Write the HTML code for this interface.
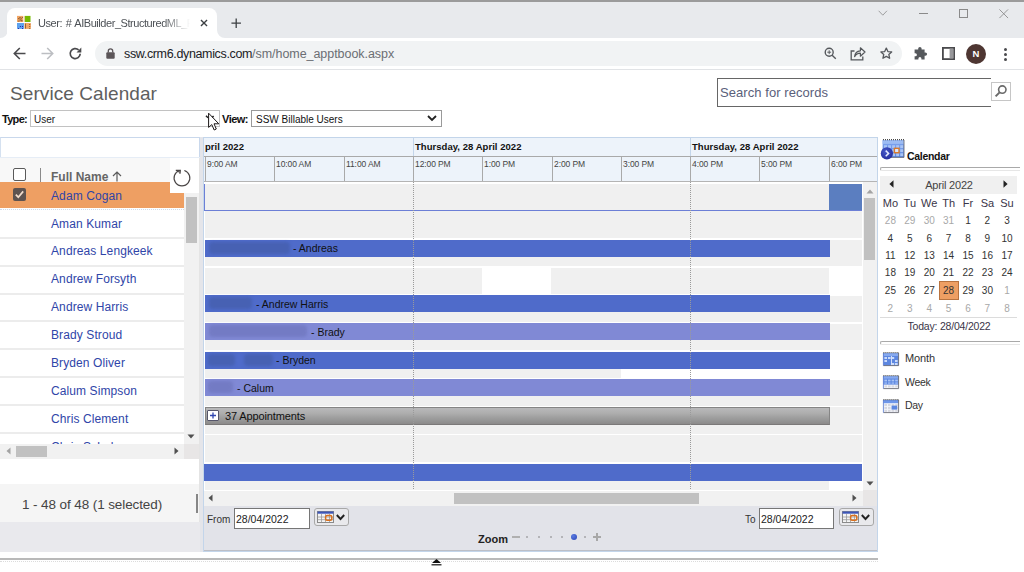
<!DOCTYPE html>
<html lang="en">
<head>
<meta charset="utf-8">
<title>User: # AIBuilder_StructuredML_F</title>
<style>
*{box-sizing:border-box;margin:0;padding:0}
html,body{width:1024px;height:572px;overflow:hidden;background:#fff}
body{position:relative;font-family:"Liberation Sans",sans-serif;font-size:11px;color:#000}
.a{position:absolute}
.t{position:absolute;white-space:nowrap;line-height:1}
.b{font-weight:bold}
svg{position:absolute;overflow:visible}
/* chrome */
#topline{left:0;top:0;width:1024px;height:2px;background:#9b9b9b}
#strip{left:0;top:2px;width:1024px;height:36px;background:#e8eaed}
#tab{left:7px;top:8px;width:210px;height:30px;background:#fff;border-radius:8px 8px 0 0}
#toolbar{left:0;top:38px;width:1024px;height:31px;background:#fff}
#tbline{left:0;top:69px;width:1024px;height:1px;background:#e1e3e6}
#pill{left:95px;top:41px;width:806.5px;height:25px;border-radius:12.5px;background:#f1f3f4}
/* grid */
.row{position:absolute;left:0;width:184px;height:28px;border-top:2px solid #ececec;background:#fff}
.nm{position:absolute;left:51px;white-space:nowrap;line-height:1;font-size:12px;letter-spacing:0.1px;color:#2f45a8}
/* timeline */
.bar{position:absolute;left:205px;height:17px;background:#4f6bca}
.bar.l{background:#8089d5}
.bl{position:absolute;filter:blur(1.6px);border-radius:4px}
.bt{position:absolute;white-space:nowrap;line-height:1;font-size:10.5px;color:#111}
.hc{position:absolute;top:156px;height:26px;border-left:1px solid #a9a9a9;border-top:1px solid #a9a9a9}
.hl{position:absolute;top:160px;font-size:8.5px;letter-spacing:-0.1px;line-height:1;color:#444;white-space:nowrap}
.gr{position:absolute;background:#f0f0f0}
/* mini calendar */
.d{position:absolute;width:20px;text-align:center;font-size:10px;line-height:11px;color:#333;white-space:nowrap}
.d.o{color:#a8a8a8}
</style>
</head>
<body>
<!-- ======= browser chrome ======= -->
<div class="a" id="strip"></div>
<div class="a" id="topline"></div>
<div class="a" id="tab"></div>
<svg style="left:0;top:30px" width="8" height="8"><path d="M0 8 H8 V0 A8 8 0 0 1 0 8Z" fill="#fff"/></svg>
<svg style="left:217px;top:30px" width="8" height="8"><path d="M8 8 H0 V0 A8 8 0 0 0 8 8Z" fill="#fff"/></svg>
<div class="a" id="toolbar"></div>
<div class="a" id="tbline"></div>
<div class="a" id="pill"></div>

<!-- favicon -->
<svg style="left:16px;top:15px" width="16" height="15" viewBox="16 15 16 15">
<rect x="17" y="15.9" width="6.3" height="6.1" fill="#f2a766"/>
<rect x="24" y="15.9" width="0.8" height="6.1" fill="#f6d2b4"/>
<rect x="24.8" y="15.9" width="5.7" height="6.1" fill="#76b900"/>
<rect x="17" y="23" width="7" height="5.9" fill="#5ea2ee"/>
<rect x="24.4" y="23" width="6.5" height="5.9" fill="#f2a766"/>
<g fill="#6b3f1e" fill-opacity="0.8"><rect x="18.2" y="18" width="1.2" height="1.2"/><rect x="19.4" y="17" width="1.2" height="1.2"/><rect x="20.6" y="18.2" width="1.2" height="1.2"/><rect x="19.6" y="19.4" width="1.2" height="1.2"/><rect x="21.2" y="20" width="1.2" height="1.4"/><rect x="18.2" y="20.6" width="1.2" height="1"/><rect x="21.8" y="17" width="1" height="1"/></g>
<g fill="#2a1ca8"><rect x="19.9" y="26" width="1" height="1"/><rect x="22" y="26" width="1" height="1"/><rect x="18" y="28" width="1" height="0.9"/><rect x="22" y="28" width="1" height="0.9"/></g>
<g fill="#6b3f1e" fill-opacity="0.85"><rect x="25.2" y="23.6" width="0.8" height="5"/><rect x="29.2" y="24" width="1" height="0.9"/><rect x="29.2" y="26" width="1" height="0.9"/><rect x="29.2" y="28" width="1" height="0.8"/></g>
</svg>
<div class="t" id="tabtitle" style="left:38px;top:15px;line-height:16px;height:18px;font-size:11px;letter-spacing:-0.45px;word-spacing:1px;color:#4d5156;width:152px;overflow:hidden;-webkit-mask-image:linear-gradient(90deg,#000 82%,transparent 100%);mask-image:linear-gradient(90deg,#000 82%,transparent 100%)">User: # AIBuilder_StructuredML_F</div>
<svg style="left:199.5px;top:19.2px" width="8" height="8" viewBox="0 0 10 10"><path d="M1.2 1.2 L8.8 8.8 M8.8 1.2 L1.2 8.8" stroke="#3c4043" stroke-width="1.7" fill="none"/></svg>
<svg style="left:231px;top:18px" width="10.4" height="10.4" viewBox="0 0 12 12"><path d="M6 0.5 V11.5 M0.5 6 H11.5" stroke="#3c4043" stroke-width="1.5" fill="none"/></svg>
<!-- window controls -->
<svg style="left:878.3px;top:10px" width="9.6" height="6.4" viewBox="0 0 12 8"><path d="M0.8 1 L6 6.5 L11.2 1" stroke="#8a8a8a" stroke-width="1" fill="none"/></svg>
<div class="a" style="left:919px;top:13px;width:9px;height:1px;background:#8a8a8a"></div>
<div class="a" style="left:959px;top:9px;width:9px;height:9px;border:1px solid #8a8a8a"></div>
<svg style="left:999px;top:9px" width="9.5" height="9.5" viewBox="0 0 11 11"><path d="M0.5 0.5 L10.5 10.5 M10.5 0.5 L0.5 10.5" stroke="#8a8a8a" stroke-width="1" fill="none"/></svg>
<!-- nav -->
<svg style="left:13px;top:47px" width="13" height="13" viewBox="0 0 13 13"><path d="M12.5 6.5 H1.5 M6.8 1 L1.3 6.5 L6.8 12" stroke="#4a4a4d" stroke-width="1.6" fill="none"/></svg>
<svg style="left:41px;top:47px" width="13" height="13" viewBox="0 0 13 13"><path d="M0.5 6.5 H11.5 M6.2 1 L11.7 6.5 L6.2 12" stroke="#bcbec2" stroke-width="1.6" fill="none"/></svg>
<svg style="left:69px;top:47px" width="13" height="13" viewBox="0 0 13 13"><path d="M11.2 6.8 A5 5 0 1 1 9.6 2.9" stroke="#4a4a4d" stroke-width="1.7" fill="none"/><path d="M12.3 0.6 V5.4 H7.5 Z" fill="#4a4a4d"/></svg>
<!-- lock -->
<svg style="left:106px;top:48px" width="9" height="11" viewBox="0 0 9 11"><rect x="0.3" y="4.2" width="8.4" height="6.5" rx="1" fill="#5b5558"/><path d="M2.3 4.5 V3 A2.2 2.2 0 0 1 6.7 3 V4.5" stroke="#5b5558" stroke-width="1.3" fill="none"/></svg>
<div class="t" id="url" style="left:124px;top:48px;font-size:12.5px;color:#202124;letter-spacing:-0.35px">ssw.crm6.dynamics.com<span style="color:#6b6e73;letter-spacing:-0.05px">/sm/home_apptbook.aspx</span></div>
<!-- right icons -->
<svg style="left:823.5px;top:47px" width="13" height="13" viewBox="0 0 15 15"><circle cx="6" cy="6" r="4.6" stroke="#55585c" stroke-width="1.6" fill="none"/><path d="M9.4 9.4 L13.6 13.6" stroke="#55585c" stroke-width="1.6"/><path d="M3.8 6 H8.2 M6 3.8 V8.2" stroke="#55585c" stroke-width="1.1"/></svg>
<svg style="left:850px;top:46px" width="16" height="15" viewBox="0 0 16 15"><path d="M4.5 5 H1.2 V13.8 H12.8 V10.5" stroke="#55585c" stroke-width="1.3" fill="none"/><path d="M4.6 10.6 C5 6.8 7.6 5 10.4 4.8 V1.8 L15 6 L10.4 10.2 V7.2 C8 7.2 6.2 8 4.6 10.6Z" stroke="#55585c" stroke-width="1.2" fill="none" stroke-linejoin="round"/></svg>
<svg style="left:879.5px;top:47px" width="12.6" height="12.6" viewBox="0 0 15 15"><path d="M7.5 1.3 L9.4 5.4 L13.9 5.9 L10.5 8.9 L11.5 13.4 L7.5 11.1 L3.5 13.4 L4.5 8.9 L1.1 5.9 L5.6 5.4Z" stroke="#55585c" stroke-width="1.55" fill="none" stroke-linejoin="round"/></svg>
<svg style="left:913px;top:46px" width="15" height="15" viewBox="0 0 15 15"><path d="M5.2 2.6 A1.7 1.7 0 0 1 8.6 2.6 V3.4 H11.6 V6.4 H12.4 A1.7 1.7 0 0 1 12.4 9.8 H11.6 V13.5 H8.4 V12.6 A1.5 1.5 0 0 0 5.4 12.6 V13.5 H1.6 V10.2 H2.4 A1.5 1.5 0 0 0 2.4 7.2 H1.6 V3.4 H5.2Z" fill="#55585c"/></svg>
<svg style="left:942px;top:47px" width="13" height="13" viewBox="0 0 13 13"><rect x="0.9" y="0.9" width="11.2" height="11.2" stroke="#4a4a4d" stroke-width="1.8" fill="#fff"/><rect x="7.6" y="1.6" width="3.8" height="9.8" fill="#97979a"/></svg>
<div class="a" style="left:966px;top:44px;width:20px;height:20px;border-radius:50%;background:#4e3632"></div>
<div class="t" style="left:966px;top:49px;width:20px;text-align:center;font-size:9.5px;font-weight:bold;color:#fff">N</div>
<div class="a" style="left:1004px;top:48px;width:3px;height:3px;border-radius:50%;background:#4a4a4d"></div>
<div class="a" style="left:1004px;top:53px;width:3px;height:3px;border-radius:50%;background:#4a4a4d"></div>
<div class="a" style="left:1004px;top:58px;width:3px;height:3px;border-radius:50%;background:#4a4a4d"></div>


<!-- ======= page header ======= -->
<div class="t" id="title" style="left:10px;top:84px;font-size:19px;letter-spacing:0.08px;color:#5e5e5e">Service Calendar</div>
<div class="a" style="left:717px;top:78px;width:274px;height:29px;border:1px solid #666;border-right:none;background:#fff"></div>
<div class="t" id="search" style="left:720px;top:86px;font-size:13px;letter-spacing:0.06px;color:#5a607a">Search for records</div>
<div class="a" style="left:991px;top:82px;width:20px;height:19px;border:1px solid #c6c6c6;background:#fff"></div>
<svg style="left:994px;top:84px" width="14" height="14" viewBox="0 0 14 14"><circle cx="8.3" cy="5.6" r="3.7" stroke="#6a6a6a" stroke-width="1.6" fill="none"/><path d="M5.6 8.4 L1.6 12.4" stroke="#6a6a6a" stroke-width="2"/></svg>
<div class="t b" id="typel" style="left:2px;top:114px;font-size:11px;letter-spacing:-0.7px;color:#111">Type:</div>
<div class="a" style="left:30px;top:110px;width:190px;height:17px;border:1px solid #c2c2c2;background:#fff"></div>
<div class="t" style="left:34px;top:115px;font-size:10px;color:#222">User</div>
<div class="t b" id="viewl" style="left:222px;top:114px;font-size:11px;letter-spacing:-0.5px;color:#111">View:</div>
<div class="a" style="left:251px;top:110px;width:191px;height:17px;border:1px solid #9a9a9a;background:#fff"></div>
<div class="t" id="viewv" style="left:256px;top:115px;font-size:10px;color:#111">SSW Billable Users</div>
<svg style="left:427px;top:115px" width="10" height="7" viewBox="0 0 10 7"><path d="M1 1 L5 5 L9 1" stroke="#222" stroke-width="1.8" fill="none"/></svg>
<!-- mouse cursor -->
<svg style="left:204px;top:110px" width="18" height="22" viewBox="204 110 18 22"><path d="M208.6 113.2 V127.4 L211.8 124.6 L214.2 130 L216.3 129 L214 123.8 H218.8 Z" fill="#fff" stroke="#1a1616" stroke-width="1" stroke-linejoin="round"/><path d="M206 115.8 L208 117.8 M212.2 117.4 L213.6 116" stroke="#222" stroke-width="1.5" fill="none"/></svg>


<!-- ======= left grid ======= -->
<div class="a" style="left:0;top:137px;width:200px;height:21px;border-top:1px solid #c9d8ec;border-right:1px solid #c9d8ec;border-left:1px solid #d5e1f0;background:#fff"></div>
<div class="a" style="left:0;top:157px;width:200px;height:1px;background:#e6edf6"></div>
<div class="a" style="left:0;top:158px;width:184px;height:24px;background:#f8f8f8"></div>
<div class="a" style="left:13px;top:168px;width:13px;height:13px;border:1px solid #5a5a5a;border-radius:2px;background:#fff"></div>
<div class="a" style="left:40px;top:168px;width:1px;height:14px;background:#8a8a8a"></div>
<div class="t" id="fullname" style="left:51px;top:171px;font-size:12px;font-weight:bold;color:#666">Full Name</div>
<svg style="left:112px;top:171px" width="10" height="11" viewBox="0 0 10 11"><path d="M5 10.5 V1.2 M1 5 L5 1 L9 5" stroke="#5c5c5c" stroke-width="1.2" fill="none"/></svg>
<div class="row" style="top:182px;height:26px;background:#ee9f63;border-top:none"></div>
<div class="a" style="left:13px;top:188px;width:13px;height:13px;background:#5e5350;border-radius:2px"></div>
<svg style="left:14px;top:189px" width="11" height="11" viewBox="0 0 11 11"><path d="M1.8 5.6 L4.3 8.2 L9.2 2.4" stroke="#f1dccb" stroke-width="1.7" fill="none"/></svg>
<div class="nm" style="top:190px">Adam Cogan</div>
<div class="row" style="top:208px;height:29px;border-top:none"></div><div class="a" style="left:0;top:209px;width:184px;height:0;border-top:1px dotted #cfdcec"></div>
<div class="nm" style="top:218px">Aman Kumar</div>
<div class="row" style="top:237px;height:28px"></div>
<div class="nm" style="top:245px">Andreas Lengkeek</div>
<div class="row" style="top:265px;height:28px"></div>
<div class="nm" style="top:273px">Andrew Forsyth</div>
<div class="row" style="top:293px;height:28px"></div>
<div class="nm" style="top:301px">Andrew Harris</div>
<div class="row" style="top:320px;height:28px"></div>
<div class="nm" style="top:329px">Brady Stroud</div>
<div class="row" style="top:348px;height:28px"></div>
<div class="nm" style="top:357px">Bryden Oliver</div>
<div class="row" style="top:376px;height:28px"></div>
<div class="nm" style="top:385px">Calum Simpson</div>
<div class="row" style="top:404px;height:28px"></div>
<div class="nm" style="top:413px">Chris Clement</div>
<div class="row" style="top:432px;height:12px"></div>
<div class="nm" style="top:441px;height:3px;overflow:hidden">Chris Schulz</div>
<div class="a" style="left:170px;top:158px;width:30px;height:35px;background:#fff"></div>
<svg style="left:170px;top:160px" width="30" height="32" viewBox="170 160 30 32"><path d="M184.3 170.5 A7.9 7.9 0 1 1 179.6 170.5" stroke="#4a4646" stroke-width="1.15" fill="none"/><path d="M175.8 170.3 H180.3 L180 173.8" stroke="#4a4646" stroke-width="1.2" fill="#4a4646" fill-opacity="0.55" stroke-linejoin="miter"/></svg>
<div class="a" style="left:184px;top:193px;width:15px;height:251px;background:#f1f1f1"></div>
<div class="a" style="left:186px;top:197px;width:11px;height:46px;background:#c1c1c1"></div>
<svg style="left:187px;top:434px" width="8" height="5" viewBox="0 0 8 5"><path d="M0.5 0.5 H7.5 L4 4.5Z" fill="#505050"/></svg>
<div class="a" style="left:0;top:444px;width:184px;height:15px;background:#f1f1f1"></div>
<div class="a" style="left:16px;top:446px;width:31px;height:11px;background:#c1c1c1"></div>
<svg style="left:6px;top:447px" width="5" height="8" viewBox="0 0 5 8"><path d="M4.5 0.5 V7.5 L0.5 4Z" fill="#a3a3a3"/></svg>
<svg style="left:174px;top:447px" width="5" height="8" viewBox="0 0 5 8"><path d="M0.5 0.5 V7.5 L4.5 4Z" fill="#505050"/></svg>
<div class="a" style="left:184px;top:444px;width:15px;height:15px;background-color:#e8e6e6;background-image:radial-gradient(circle,#c9cfe0 0.55px,transparent 0.7px);background-size:2px 2px"></div>
<div class="a" style="left:199px;top:158px;width:1px;height:364px;background:#e4e4e4"></div>
<div class="a" style="left:0;top:484px;width:199px;height:38px;background:#f5f5f5"></div>
<div class="t" id="foot" style="left:22px;top:498px;font-size:13.5px;letter-spacing:-0.1px;color:#444">1 - 48 of 48 (1 selected)</div>
<div class="a" style="left:196px;top:494px;width:2px;height:19px;background:#868686"></div>
<div class="a" style="left:0;top:522px;width:204px;height:30px;background:#e9e9ed"></div>

<!-- ======= timeline ======= -->
<div class="a" style="left:200px;top:137px;width:3px;height:415px;background:#e4e5ea"></div>
<div class="a" id="tl" style="left:203px;top:137px;width:675px;height:415px;border:1px solid #c3d5ea;background:#fff"></div>
<div class="a" style="left:204px;top:138px;width:673px;height:44px;background:#edf3fa"></div>
<div class="a" style="left:413px;top:138px;width:1px;height:18px;background:#c3d5ea"></div>
<div class="a" style="left:690px;top:138px;width:1px;height:18px;background:#c3d5ea"></div>
<div class="t b" id="d0" style="left:205px;top:142px;font-size:9.5px;letter-spacing:0.05px;color:#111">pril 2022</div>
<div class="t b" id="d1" style="left:415px;top:142px;font-size:9.5px;letter-spacing:0.04px;color:#111">Thursday, 28 April 2022</div>
<div class="t b" id="d2" style="left:692px;top:142px;font-size:9.5px;letter-spacing:0.04px;color:#111">Thursday, 28 April 2022</div>
<div class="hc" style="left:205px;width:69px"></div>
<div class="hl" style="left:207px">9:00 AM</div>
<div class="hc" style="left:274px;width:70px"></div>
<div class="hl" style="left:276px">10:00 AM</div>
<div class="hc" style="left:344px;width:69px"></div>
<div class="hl" style="left:346px">11:00 AM</div>
<div class="hc" style="left:413px;width:69px"></div>
<div class="hl" style="left:415px">12:00 PM</div>
<div class="hc" style="left:482px;width:70px"></div>
<div class="hl" style="left:484px">1:00 PM</div>
<div class="hc" style="left:552px;width:69px"></div>
<div class="hl" style="left:554px">2:00 PM</div>
<div class="hc" style="left:621px;width:69px"></div>
<div class="hl" style="left:623px">3:00 PM</div>
<div class="hc" style="left:690px;width:69px"></div>
<div class="hl" style="left:692px">4:00 PM</div>
<div class="hc" style="left:759px;width:70px"></div>
<div class="hl" style="left:761px">5:00 PM</div>
<div class="hc" style="left:829px;width:48px"></div>
<div class="hl" style="left:831px">6:00 PM</div>
<div class="a" style="left:204px;top:156px;width:1px;height:1px;background:#a9a9a9"></div>
<div class="a" style="left:204px;top:181px;width:673px;height:1px;background:#b4b4b4"></div>
<div class="gr" style="left:204px;top:184px;width:658px;height:27px;background:#f0f0f0;border-left:1px solid #6c7fd6;border-bottom:1px solid #6c7fd6"></div>
<div class="a" style="left:829px;top:184px;width:33px;height:26px;background:#5b7ec0"></div>
<div class="gr" style="left:205px;top:211px;width:657px;height:27px"></div>
<div class="gr" style="left:205px;top:240px;width:657px;height:26px"></div>
<div class="gr" style="left:205px;top:268px;width:277px;height:26px"></div>
<div class="gr" style="left:551px;top:268px;width:278px;height:26px"></div>
<div class="gr" style="left:205px;top:296px;width:657px;height:26px"></div>
<div class="gr" style="left:205px;top:324px;width:657px;height:26px"></div>
<div class="gr" style="left:205px;top:352px;width:416px;height:26px"></div>
<div class="gr" style="left:205px;top:380px;width:657px;height:26px"></div>
<div class="gr" style="left:205px;top:407px;width:657px;height:27px"></div>
<div class="gr" style="left:205px;top:435px;width:657px;height:27px"></div>
<div class="gr" style="left:205px;top:464px;width:624px;height:26px"></div>
<div class="bar" style="left:205px;top:240px;width:625px;height:16.5px"></div>
<div class="bl" style="left:209px;top:242px;width:81px;height:12px;background:#4761b3"></div>
<div class="bt" id="b2" style="left:293px;top:243px">- Andreas</div>
<div class="bar" style="left:205px;top:295px;width:625px;height:17px"></div>
<div class="bl" style="left:209px;top:297px;width:43px;height:12px;background:#4761b3"></div>
<div class="bt" id="b4" style="left:256px;top:299px">- Andrew Harris</div>
<div class="bar l" style="left:205px;top:323px;width:625px;height:17px"></div>
<div class="bl" style="left:209px;top:325px;width:98px;height:12px;background:#737bc4"></div>
<div class="bt" id="b5" style="left:311px;top:327px">- Brady</div>
<div class="bar" style="left:205px;top:352px;width:625px;height:16.5px"></div>
<div class="bl" style="left:208px;top:354px;width:27px;height:12px;background:#4761b3"></div>
<div class="bl" style="left:244px;top:354px;width:29px;height:12px;background:#4761b3"></div>
<div class="bt" id="b6" style="left:276px;top:355px">- Bryden</div>
<div class="bar l" style="left:205px;top:379px;width:625px;height:17px"></div>
<div class="bl" style="left:208px;top:381px;width:25px;height:12px;background:#737bc4"></div>
<div class="bt" id="b7" style="left:237px;top:383px">- Calum</div>
<div class="a" style="left:205px;top:407px;width:625px;height:18px;border:1px solid #858585;border-bottom-color:#7b7979;background:linear-gradient(#b9b9bb 0%,#adadad 35%,#a1a1a1 55%,#959595 80%,#8c8a8a 100%)"></div>
<div class="a" style="left:207px;top:410px;width:12px;height:11px;border:1px solid #55556a;background:#fff;border-radius:1px"></div>
<svg style="left:209px;top:412px" width="8" height="7" viewBox="0 0 8 7"><path d="M4 0.5 V6.5 M1 3.5 H7" stroke="#2f45b0" stroke-width="1.3"/></svg>
<div class="bt" id="b8" style="font-size:11px;letter-spacing:-0.13px;left:225px;top:411px">37 Appointments</div>
<div class="bar" style="left:204px;top:464px;width:658px;height:16.5px"></div>
<div class="a" style="left:413px;top:182px;width:0;height:309px;border-left:1px dotted #9a9a9a"></div>
<div class="a" style="left:690px;top:182px;width:0;height:309px;border-left:1px dotted #9a9a9a"></div>
<div class="a" style="left:863px;top:182px;width:14px;height:308px;background:#f1f1f1"></div>
<div class="a" style="left:864px;top:198px;width:11px;height:61.5px;background:#c1c1c1"></div>
<svg style="left:866px;top:189px" width="8" height="5" viewBox="0 0 8 5"><path d="M0.5 4.5 H7.5 L4 0.5Z" fill="#a3a3a3"/></svg>
<svg style="left:866px;top:481px" width="8" height="5" viewBox="0 0 8 5"><path d="M0.5 0.5 H7.5 L4 4.5Z" fill="#505050"/></svg>
<div class="a" style="left:204px;top:490px;width:659px;height:16px;background:#f1f1f1;border-top:1px solid #fff"></div>
<div class="a" style="left:454px;top:493px;width:245px;height:11px;background:#c1c1c1"></div>
<svg style="left:208px;top:494px" width="5" height="8" viewBox="0 0 5 8"><path d="M4.5 0.5 V7.5 L0.5 4Z" fill="#505050"/></svg>
<svg style="left:852px;top:494px" width="5" height="8" viewBox="0 0 5 8"><path d="M0.5 0.5 V7.5 L4.5 4Z" fill="#505050"/></svg>
<div class="a" style="left:863px;top:490px;width:14px;height:16px;background-color:#e8e6e6;background-image:radial-gradient(circle,#c9cfe0 0.55px,transparent 0.7px);background-size:2px 2px"></div>
<div class="a" style="left:204px;top:506px;width:673px;height:45px;background:#e2e3e9"></div><div class="a" style="left:204px;top:550px;width:673px;height:1px;background:#bcbec6"></div>
<div class="t" id="from" style="font-size:10px;left:207px;top:515px;color:#333">From</div>
<div class="a" style="left:234px;top:508px;width:76px;height:21px;border:1px solid #767676;background:#fff"></div>
<div class="t" id="fromv" style="font-size:10.5px;left:236px;top:514px;color:#222">28/04/2022</div>
<div class="t" id="to" style="font-size:10px;left:745px;top:515px;color:#333">To</div>
<div class="a" style="left:759px;top:508px;width:75px;height:21px;border:1px solid #767676;background:#fff"></div>
<div class="t" id="tov" style="font-size:10.5px;left:761px;top:514px;color:#222">28/04/2022</div>
<div class="a" style="left:314px;top:508px;width:35px;height:18px;border:1px solid #a8a8a8;border-radius:3px;background:#e9e9ec"></div>
<svg style="left:317px;top:511px" width="17" height="12" viewBox="0 0 17 12"><rect x="0.5" y="0.5" width="16" height="11" fill="#f4f4f4" stroke="#8a8a8a"/><rect x="0.5" y="0.5" width="16" height="2.2" fill="#3d56b8"/><path d="M4.5 3 V11 M8.5 3 V11 M12.5 3 V11 M1 6 H16 M1 8.7 H16" stroke="#9a9a9a" stroke-width="0.8"/><rect x="8.6" y="4.6" width="6.2" height="4.6" rx="1.5" fill="none" stroke="#d9701e" stroke-width="1.5"/></svg>
<svg style="left:336px;top:514px" width="9" height="7" viewBox="0 0 9 7"><path d="M0.8 1 L4.5 5 L8.2 1" stroke="#222" stroke-width="1.9" fill="none"/></svg>
<div class="a" style="left:839px;top:508px;width:35px;height:18px;border:1px solid #a8a8a8;border-radius:3px;background:#e9e9ec"></div>
<svg style="left:842px;top:511px" width="17" height="12" viewBox="0 0 17 12"><rect x="0.5" y="0.5" width="16" height="11" fill="#f4f4f4" stroke="#8a8a8a"/><rect x="0.5" y="0.5" width="16" height="2.2" fill="#3d56b8"/><path d="M4.5 3 V11 M8.5 3 V11 M12.5 3 V11 M1 6 H16 M1 8.7 H16" stroke="#9a9a9a" stroke-width="0.8"/><rect x="8.6" y="4.6" width="6.2" height="4.6" rx="1.5" fill="none" stroke="#d9701e" stroke-width="1.5"/></svg>
<svg style="left:861px;top:514px" width="9" height="7" viewBox="0 0 9 7"><path d="M0.8 1 L4.5 5 L8.2 1" stroke="#222" stroke-width="1.9" fill="none"/></svg>
<div class="t b" id="zoom" style="left:478px;top:534px;font-size:11px;color:#222">Zoom</div>
<div class="a" style="left:512px;top:536px;width:8px;height:2px;background:#b0b0b0"></div>
<div class="a" style="left:526px;top:536px;width:2px;height:2px;background:#b4b4b8"></div>
<div class="a" style="left:538px;top:536px;width:2px;height:2px;background:#b4b4b8"></div>
<div class="a" style="left:550px;top:536px;width:2px;height:2px;background:#b4b4b8"></div>
<div class="a" style="left:561px;top:536px;width:2px;height:2px;background:#b4b4b8"></div>
<div class="a" style="left:584px;top:536px;width:2px;height:2px;background:#b4b4b8"></div>
<div class="a" style="left:571px;top:534px;width:6px;height:6px;border-radius:50%;background:radial-gradient(circle at 35% 35%,#5a7be0,#2a44b8)"></div>
<div class="a" style="left:593px;top:536px;width:8px;height:2px;background:#a8a8a8"></div>
<div class="a" style="left:596px;top:533px;width:2px;height:8px;background:#a8a8a8"></div>

<!-- ======= right calendar panel ======= -->
<svg style="left:880px;top:136px" width="28" height="26" viewBox="880 136 28 26">
<defs><linearGradient id="cg" x1="0" y1="0" x2="0" y2="1"><stop offset="0" stop-color="#86aaf0"/><stop offset="1" stop-color="#4f7cdc"/></linearGradient>
<radialGradient id="bg" cx="0.4" cy="0.35" r="0.7"><stop offset="0" stop-color="#4658c8"/><stop offset="1" stop-color="#232c9c"/></radialGradient></defs>
<rect x="882.6" y="140" width="21.4" height="17.4" fill="url(#cg)"/>
<rect x="882.6" y="140.3" width="21.4" height="3.6" fill="#9dbcf3"/>
<rect x="884.00" y="145.20" width="3" height="3" fill="#a9c5f6"/><rect x="888.05" y="145.20" width="3" height="3" fill="#a9c5f6"/><rect x="892.10" y="145.20" width="3" height="3" fill="#a9c5f6"/><rect x="896.15" y="145.20" width="3" height="3" fill="#a9c5f6"/><rect x="900.20" y="145.20" width="3" height="3" fill="#a9c5f6"/><rect x="884.00" y="149.20" width="3" height="3" fill="#a9c5f6"/><rect x="888.05" y="149.20" width="3" height="3" fill="#a9c5f6"/><rect x="892.10" y="149.20" width="3" height="3" fill="#a9c5f6"/><rect x="896.15" y="149.20" width="3" height="3" fill="#a9c5f6"/><rect x="900.20" y="149.20" width="3" height="3" fill="#a9c5f6"/><rect x="884.00" y="153.20" width="3" height="3" fill="#a9c5f6"/><rect x="888.05" y="153.20" width="3" height="3" fill="#a9c5f6"/><rect x="892.10" y="153.20" width="3" height="3" fill="#a9c5f6"/><rect x="896.15" y="153.20" width="3" height="3" fill="#a9c5f6"/><rect x="900.20" y="153.20" width="3" height="3" fill="#a9c5f6"/>
<path d="M904 140 V157.4 H883" stroke="#6d6f78" stroke-width="0.9" fill="none"/>
<path d="M883 139.6 H904.2" stroke="#4a4a4a" stroke-width="1.3" stroke-dasharray="1 1"/>
<rect x="894.4" y="148.3" width="4.6" height="4.4" fill="#dbe6fb" stroke="#d97a2a" stroke-width="1.4"/>
<circle cx="886.9" cy="153.4" r="6.1" fill="url(#bg)"/>
<path d="M885.7 150.6 L888.6 153.4 L885.7 156.2" stroke="#e4e9ff" stroke-width="1.5" fill="none"/>
</svg>
<div class="t b" id="callbl" style="left:907px;top:150.5px;font-size:10.5px;letter-spacing:-0.3px;color:#111">Calendar</div>
<div class="a" style="left:880px;top:167px;width:140px;height:4px;border-top:1px solid #a9a9a9;border-left:1px solid #a9a9a9;border-bottom:1px solid #e6e6e6;border-radius:2px 0 0 2px"></div>
<div class="a" style="left:880px;top:176px;width:137px;height:18px;background:#f0f0f0"></div>
<svg style="left:889px;top:180px" width="5" height="8" viewBox="0 0 5 8"><path d="M4.5 0.3 V7.7 L0.4 4Z" fill="#222"/></svg>
<svg style="left:1003px;top:180px" width="5" height="8" viewBox="0 0 5 8"><path d="M0.5 0.3 V7.7 L4.6 4Z" fill="#222"/></svg>
<div class="t" id="month" style="left:899px;top:180px;width:100px;text-align:center;font-size:11px;letter-spacing:-0.2px;color:#444">April 2022</div>
<div class="d" style="left:880.4px;top:198px;font-size:11px;color:#3a3548">Mo</div>
<div class="d" style="left:899.8px;top:198px;font-size:11px;color:#3a3548">Tu</div>
<div class="d" style="left:919.2px;top:198px;font-size:11px;color:#3a3548">We</div>
<div class="d" style="left:938.6px;top:198px;font-size:11px;color:#3a3548">Th</div>
<div class="d" style="left:958.0px;top:198px;font-size:11px;color:#3a3548">Fr</div>
<div class="d" style="left:977.4px;top:198px;font-size:11px;color:#3a3548">Sa</div>
<div class="d" style="left:997.0px;top:198px;font-size:11px;color:#3a3548">Su</div>
<div class="d o" style="left:880.4px;top:214.5px">28</div>
<div class="d o" style="left:899.8px;top:214.5px">29</div>
<div class="d o" style="left:919.2px;top:214.5px">30</div>
<div class="d o" style="left:938.6px;top:214.5px">31</div>
<div class="d" style="left:958.0px;top:214.5px">1</div>
<div class="d" style="left:977.4px;top:214.5px">2</div>
<div class="d" style="left:997.0px;top:214.5px">3</div>
<div class="d" style="left:880.4px;top:232.5px">4</div>
<div class="d" style="left:899.8px;top:232.5px">5</div>
<div class="d" style="left:919.2px;top:232.5px">6</div>
<div class="d" style="left:938.6px;top:232.5px">7</div>
<div class="d" style="left:958.0px;top:232.5px">8</div>
<div class="d" style="left:977.4px;top:232.5px">9</div>
<div class="d" style="left:997.0px;top:232.5px">10</div>
<div class="d" style="left:880.4px;top:249.8px">11</div>
<div class="d" style="left:899.8px;top:249.8px">12</div>
<div class="d" style="left:919.2px;top:249.8px">13</div>
<div class="d" style="left:938.6px;top:249.8px">14</div>
<div class="d" style="left:958.0px;top:249.8px">15</div>
<div class="d" style="left:977.4px;top:249.8px">16</div>
<div class="d" style="left:997.0px;top:249.8px">17</div>
<div class="d" style="left:880.4px;top:266.8px">18</div>
<div class="d" style="left:899.8px;top:266.8px">19</div>
<div class="d" style="left:919.2px;top:266.8px">20</div>
<div class="d" style="left:938.6px;top:266.8px">21</div>
<div class="d" style="left:958.0px;top:266.8px">22</div>
<div class="d" style="left:977.4px;top:266.8px">23</div>
<div class="d" style="left:997.0px;top:266.8px">24</div>
<div class="d" style="left:880.4px;top:284.7px">25</div>
<div class="d" style="left:899.8px;top:284.7px">26</div>
<div class="d" style="left:919.2px;top:284.7px">27</div>
<div class="a" style="left:939px;top:280.5px;width:19.5px;height:19px;background:#ee9f63;border:1px solid #b8733f"></div>
<div class="d" style="left:938.6px;top:284.7px">28</div>
<div class="d" style="left:958.0px;top:284.7px">29</div>
<div class="d" style="left:977.4px;top:284.7px">30</div>
<div class="d o" style="left:997.0px;top:284.7px">1</div>
<div class="d o" style="left:880.4px;top:302.8px">2</div>
<div class="d o" style="left:899.8px;top:302.8px">3</div>
<div class="d o" style="left:919.2px;top:302.8px">4</div>
<div class="d o" style="left:938.6px;top:302.8px">5</div>
<div class="d o" style="left:958.0px;top:302.8px">6</div>
<div class="d o" style="left:977.4px;top:302.8px">7</div>
<div class="d o" style="left:997.0px;top:302.8px">8</div>
<div class="a" style="left:880px;top:317px;width:137px;height:1px;background:#dcdcdc"></div>
<div class="t" id="today" style="left:880px;top:321px;width:138px;text-align:center;font-size:10.5px;letter-spacing:-0.2px;color:#3a3548">Today: 28/04/2022</div>
<div class="a" style="left:880px;top:341px;width:140px;height:4px;border-top:1px solid #a9a9a9;border-left:1px solid #a9a9a9;border-bottom:1px solid #e6e6e6;border-radius:2px 0 0 2px"></div>
<svg style="left:883px;top:352px" width="16" height="14" viewBox="0 0 16 14"><rect x="0.4" y="1" width="15.2" height="12.6" fill="#f3f5fb"/><rect x="0.4" y="1" width="15.2" height="12.6" fill="#5d87e0"/><rect x="0.4" y="1" width="15.2" height="3" fill="#86a9ef"/><rect x="1.4" y="5" width="2.6" height="2" fill="#c9dafa"/><rect x="5" y="5" width="2.6" height="2" fill="#c9dafa"/><rect x="1.4" y="8" width="2.6" height="2" fill="#c9dafa"/><rect x="12" y="8" width="2.6" height="2" fill="#c9dafa"/><rect x="8.6" y="11" width="2.6" height="2" fill="#c9dafa"/><rect x="12" y="11" width="2.6" height="2" fill="#c9dafa"/><rect x="8.6" y="5" width="2.6" height="2" fill="#c9dafa"/><rect x="8" y="4" width="0.9" height="9.6" fill="#dfe8fb"/><path d="M15.6 1 V13.6 H0.4" stroke="#6a6c74" stroke-width="0.9" fill="none"/><path d="M0.4 1 V13.6" stroke="#5578d0" stroke-width="0.8" fill="none"/><path d="M0.4 0.7 H15.8" stroke="#4a4a4a" stroke-width="1.2" stroke-dasharray="1 1"/></svg>
<div class="t" id="vm" style="left:905px;top:352.5px;font-size:11px;letter-spacing:-0.1px;color:#333">Month</div>
<svg style="left:883px;top:375.3px" width="16" height="14" viewBox="0 0 16 14"><rect x="0.4" y="1" width="15.2" height="12.6" fill="#f3f5fb"/><rect x="0.4" y="1" width="15.2" height="8.6" fill="#5d87e0"/><rect x="0.4" y="1" width="15.2" height="2.6" fill="#86a9ef"/><rect x="1.4" y="4.6" width="2.6" height="1.8" fill="#a9c3f5"/><rect x="1.4" y="7.2" width="2.6" height="1.8" fill="#8fb0f0"/><rect x="1.4" y="10.4" width="2.6" height="2" fill="#d9d9df"/><rect x="5.0" y="4.6" width="2.6" height="1.8" fill="#a9c3f5"/><rect x="5.0" y="7.2" width="2.6" height="1.8" fill="#8fb0f0"/><rect x="5.0" y="10.4" width="2.6" height="2" fill="#d9d9df"/><rect x="8.6" y="4.6" width="2.6" height="1.8" fill="#a9c3f5"/><rect x="8.6" y="7.2" width="2.6" height="1.8" fill="#8fb0f0"/><rect x="8.6" y="10.4" width="2.6" height="2" fill="#d9d9df"/><rect x="12.200000000000001" y="4.6" width="2.6" height="1.8" fill="#a9c3f5"/><rect x="12.200000000000001" y="7.2" width="2.6" height="1.8" fill="#8fb0f0"/><rect x="12.200000000000001" y="10.4" width="2.6" height="2" fill="#d9d9df"/><path d="M15.6 1 V13.6 H0.4" stroke="#6a6c74" stroke-width="0.9" fill="none"/><path d="M0.4 1 V13.6" stroke="#5578d0" stroke-width="0.8" fill="none"/><path d="M0.4 0.7 H15.8" stroke="#4a4a4a" stroke-width="1.2" stroke-dasharray="1 1"/></svg>
<div class="t" id="vw" style="left:905px;top:376.5px;font-size:10.5px;letter-spacing:-0.3px;color:#333">Week</div>
<svg style="left:883px;top:399.2px" width="16" height="14" viewBox="0 0 16 14"><rect x="0.4" y="1" width="15.2" height="12.6" fill="#f3f5fb"/><rect x="0.4" y="1" width="15.2" height="3.2" fill="#6f97ea"/><rect x="1.4" y="5.0" width="2.6" height="2" fill="#d6d8e0"/><rect x="5.0" y="5.0" width="2.6" height="2" fill="#d6d8e0"/><rect x="8.6" y="5.0" width="2.6" height="2" fill="#d6d8e0"/><rect x="12.200000000000001" y="5.0" width="2.6" height="2" fill="#d6d8e0"/><rect x="1.4" y="7.9" width="2.6" height="2" fill="#d6d8e0"/><rect x="5.0" y="7.9" width="2.6" height="2" fill="#d6d8e0"/><rect x="8.6" y="7.9" width="2.6" height="2" fill="#d6d8e0"/><rect x="12.200000000000001" y="7.9" width="2.6" height="2" fill="#d6d8e0"/><rect x="1.4" y="10.8" width="2.6" height="2" fill="#d6d8e0"/><rect x="5.0" y="10.8" width="2.6" height="2" fill="#d6d8e0"/><rect x="8.6" y="10.8" width="2.6" height="2" fill="#d6d8e0"/><rect x="12.200000000000001" y="10.8" width="2.6" height="2" fill="#d6d8e0"/><rect x="8.6" y="6.6" width="5.6" height="4" fill="#5d87e0"/><path d="M15.6 1 V13.6 H0.4" stroke="#6a6c74" stroke-width="0.9" fill="none"/><path d="M0.4 1 V13.6" stroke="#5578d0" stroke-width="0.8" fill="none"/><path d="M0.4 0.7 H15.8" stroke="#4a4a4a" stroke-width="1.2" stroke-dasharray="1 1"/></svg>
<div class="t" id="vd" style="left:905px;top:399.5px;font-size:10.5px;letter-spacing:-0.3px;color:#333">Day</div>

<!-- ======= bottom ======= -->
<div class="a" style="left:0;top:558px;width:878px;height:2px;background:#b9b9b9"></div>
<div class="a" style="left:0;top:561px;width:878px;height:0;border-top:1px dotted #dcdcdc"></div>
<svg style="left:431px;top:559px" width="11" height="7" viewBox="0 0 11 7"><path d="M5.5 0 L10 4 H1Z" fill="#111"/><path d="M0.5 5.8 H10.5" stroke="#111" stroke-width="1.2"/></svg>

</body>
</html>
